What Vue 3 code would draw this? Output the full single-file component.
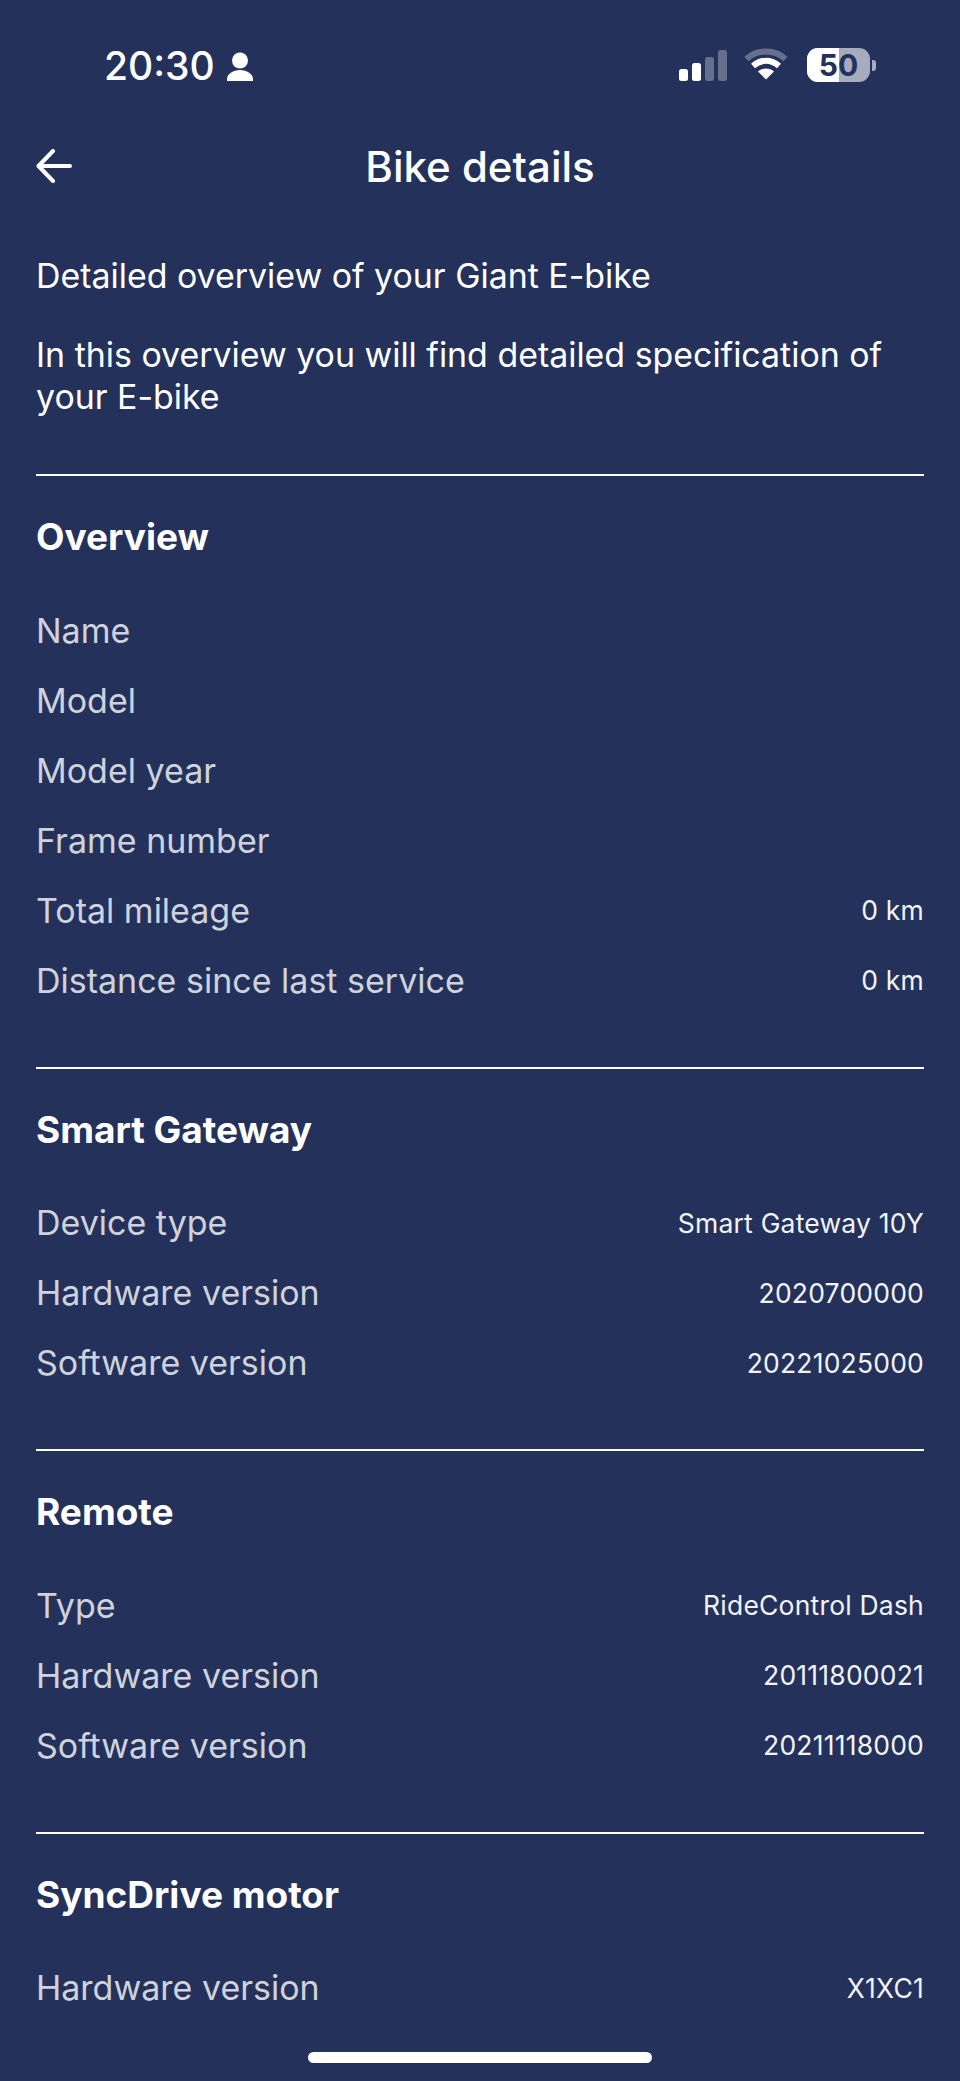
<script setup>
const sections = [
  {
    title: 'Overview',
    rows: [
      ['Name', ''],
      ['Model', ''],
      ['Model year', ''],
      ['Frame number', ''],
      ['Total mileage', '0 km'],
      ['Distance since last service', '0 km'],
    ],
  },
  {
    title: 'Smart Gateway',
    rows: [
      ['Device type', 'Smart Gateway 10Y'],
      ['Hardware version', '2020700000'],
      ['Software version', '20221025000'],
    ],
  },
  {
    title: 'Remote',
    rows: [
      ['Type', 'RideControl Dash'],
      ['Hardware version', '20111800021'],
      ['Software version', '20211118000'],
    ],
  },
  {
    title: 'SyncDrive motor',
    rows: [['Hardware version', 'X1XC1']],
  },
]
</script>

<template>
  <div class="screen">
    <div class="status-bar">
      <div class="status-left">
        <span class="time">20:30</span>
        <svg class="person" width="28" height="29" viewBox="0 0 28 29">
          <circle cx="14" cy="8.500" r="8" fill="#fff" />
          <path d="M1 29c-1-7 6-11 13-11s14 4 13 11z" fill="#fff" />
        </svg>
      </div>
      <div class="status-right">
        <svg width="50" height="32" viewBox="0 0 50 32">
          <rect x="1" y="20" width="9" height="12" rx="2.500" fill="#fff" />
          <rect x="14" y="14" width="9" height="18" rx="2.500" fill="#fff" />
          <rect x="27" y="8" width="9" height="24" rx="2.500" fill="#fff" opacity="0.3" />
          <rect x="40" y="1" width="9" height="31" rx="2.500" fill="#fff" opacity="0.3" />
        </svg>
        <svg class="wifi" width="44" height="32" viewBox="0 0 44 32">
          <path d="M2.500 11C13 1 31 1 41.500 11" fill="none" stroke="#fff" stroke-width="6" opacity="0.3" />
          <path d="M9 18c8-7 18-7 26 0" fill="none" stroke="#fff" stroke-width="6" />
          <path d="M22 31.500l-8-8c4-4 12-4 16 0z" fill="#fff" />
        </svg>
        <div class="battery">
          <div class="battery-body">
            <div class="battery-fill"></div>
            <span class="battery-text">50</span>
          </div>
          <div class="battery-cap"></div>
        </div>
      </div>
    </div>

    <header class="nav">
      <svg class="back" width="36" height="34" viewBox="0 0 36 34">
        <path d="M34 17H3M17 2L2.500 17L17 32" fill="none" stroke="#fff" stroke-width="4" stroke-linecap="round" stroke-linejoin="round" />
      </svg>
      <h1>Bike details</h1>
    </header>

    <main class="content">
      <p class="intro">Detailed overview of your Giant E-bike</p>
      <p class="intro second">In this overview you will find detailed specification of your E-bike</p>

      <section v-for="section in sections" :key="section.title" class="section">
        <h2>{{ section.title }}</h2>
        <div v-for="row in section.rows" :key="row[0]" class="row">
          <span class="label">{{ row[0] }}</span>
          <span class="value">{{ row[1] }}</span>
        </div>
      </section>
    </main>

    <div class="home-bar"></div>
  </div>
</template>

<style scoped>
.screen {
  position: relative;
  width: 960px;
  height: 2081px;
  overflow: hidden;
  background: #24325b;
  color: #fff;
  font-family: Inter, "Noto Sans", sans-serif;
}
.status-bar {
  height: 130px;
  display: flex;
  justify-content: space-between;
  align-items: center;
  padding: 0 84px 0 104px;
}
.status-left {
  display: flex;
  align-items: center;
  gap: 11px;
}
.time {
  font-size: 39px;
  font-weight: 500;
  line-height: 1;
}
.person {
  margin-top: 2px;
}
.status-right {
  display: flex;
  align-items: center;
  gap: 16px;
}
.wifi {
  margin-top: -2px;
}
.battery {
  display: flex;
  align-items: center;
  gap: 2px;
  margin-left: 3px;
}
.battery-body {
  position: relative;
  width: 63px;
  height: 34px;
  border-radius: 11px;
  overflow: hidden;
  background: #a6abbd;
  text-align: center;
}
.battery-fill {
  position: absolute;
  left: 0;
  top: 0;
  bottom: 0;
  width: 32px;
  background: #fff;
}
.battery-text {
  position: relative;
  font-size: 30px;
  font-weight: 700;
  line-height: 34px;
  color: #24325b;
}
.battery-cap {
  width: 4px;
  height: 11px;
  border-radius: 0 3px 3px 0;
  background: #a6abbd;
}
.nav {
  position: relative;
  height: 72px;
  display: flex;
  align-items: center;
  justify-content: center;
}
.back {
  position: absolute;
  left: 36px;
  top: 19px;
}
h1 {
  margin: 0;
  font-size: 42px;
  font-weight: 500;
}
.content {
  padding: 0 36px;
}
.intro {
  margin: 0;
  font-size: 33.900px;
  line-height: 42px;
  padding-top: 53px;
}
.second {
  padding-top: 37px;
  padding-bottom: 56px;
}
.section {
  border-top: 2px solid #fff;
  padding: 39px 0 51.500px;
}
h2 {
  margin: 0 0 36px;
  font-size: 37px;
  font-weight: 700;
  line-height: 44px;
}
.row {
  height: 70px;
  display: flex;
  justify-content: space-between;
  align-items: center;
}
.label {
  font-size: 34px;
  color: #cfd2dc;
}
.value {
  font-size: 26.500px;
  letter-spacing: 0.2px;
  color: #f2f3f6;
}
.home-bar {
  position: absolute;
  left: 308px;
  bottom: 18px;
  width: 344px;
  height: 11px;
  border-radius: 6px;
  background: #fff;
}
</style>
